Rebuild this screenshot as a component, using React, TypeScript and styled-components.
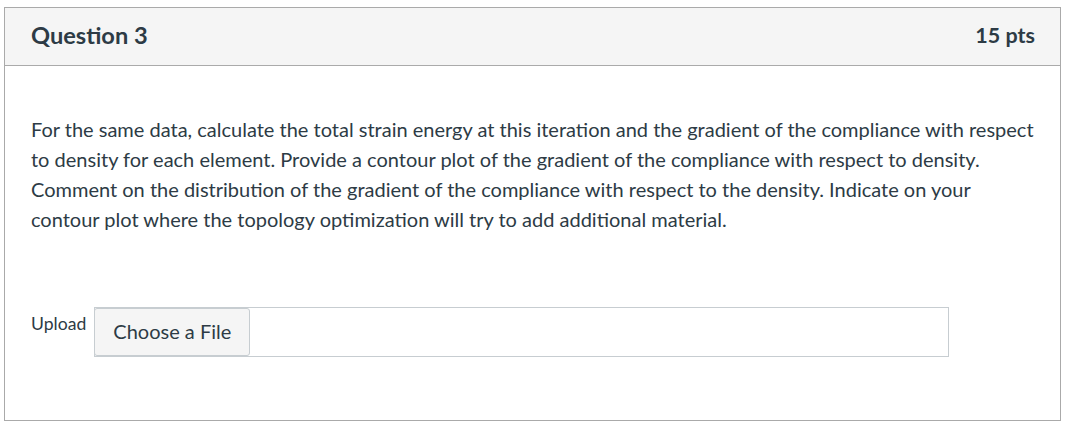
import React from "react";
import styled, { createGlobalStyle } from "styled-components";

const Global = createGlobalStyle`
  html, body { margin: 0; padding: 0; background: #fff; }
  body { font-family: Lato, "Noto Sans", sans-serif; color: #2d3b45; }
`;

const Page = styled.div`
  padding: 7px 7px 0 4px;
`;

const Card = styled.div`
  border: 1px solid #aaaaaa;
  width: 1057px;
  height: 414px;
  box-sizing: border-box;
`;

const Header = styled.div`
  display: flex;
  justify-content: space-between;
  align-items: center;
  height: 58px;
  box-sizing: border-box;
  background: #f5f5f5;
  border-bottom: 1px solid #aaaaaa;
  padding: 0 25px 3px 26px;
`;

const Title = styled.h2`
  margin: 0;
  font-size: 23.6px;
  font-weight: 700;
  color: #2d3b45;
`;

const Points = styled.div`
  font-size: 21.5px;
  font-weight: 700;
  color: #2d3b45;
`;

const Body = styled.div`
  padding: 48px 20px 0 26px;
`;

const Text = styled.p`
  margin: 0;
  font-size: 20px;
  line-height: 30px;
`;

const UploadRow = styled.div`
  display: flex;
  align-items: flex-start;
  gap: 8px;
  margin-top: 73px;
`;

const Label = styled.span`
  font-size: 17.6px;
  padding-top: 6px;
`;

const FileBox = styled.div`
  display: flex;
  width: 855px;
  height: 50px;
  box-sizing: border-box;
  border: 1px solid #c7cdd1;
`;

const ChooseButton = styled.button`
  font-family: Lato, "Noto Sans", sans-serif;
  font-size: 20px;
  color: #2d3b45;
  background: #f5f5f5;
  border: 1px solid #c7cdd1;
  border-radius: 3px;
  margin: 0 0 0 -1px;
  height: 48px;
  width: 156px;
  padding: 0 0 3px;
`;

export default function App() {
  return (
    <>
      <Global />
      <Page>
        <Card>
          <Header>
            <Title>Question 3</Title>
            <Points>15 pts</Points>
          </Header>
          <Body>
            <Text>
              For the same data, calculate the total strain energy at this iteration and the gradient of the compliance with respect
              to density for each element. Provide a contour plot of the gradient of the compliance with respect to density.
              Comment on the distribution of the gradient of the compliance with respect to the density. Indicate on your
              contour plot where the topology optimization will try to add additional material.
            </Text>
            <UploadRow>
              <Label>Upload</Label>
              <FileBox>
                <ChooseButton>Choose a File</ChooseButton>
              </FileBox>
            </UploadRow>
          </Body>
        </Card>
      </Page>
    </>
  );
}
